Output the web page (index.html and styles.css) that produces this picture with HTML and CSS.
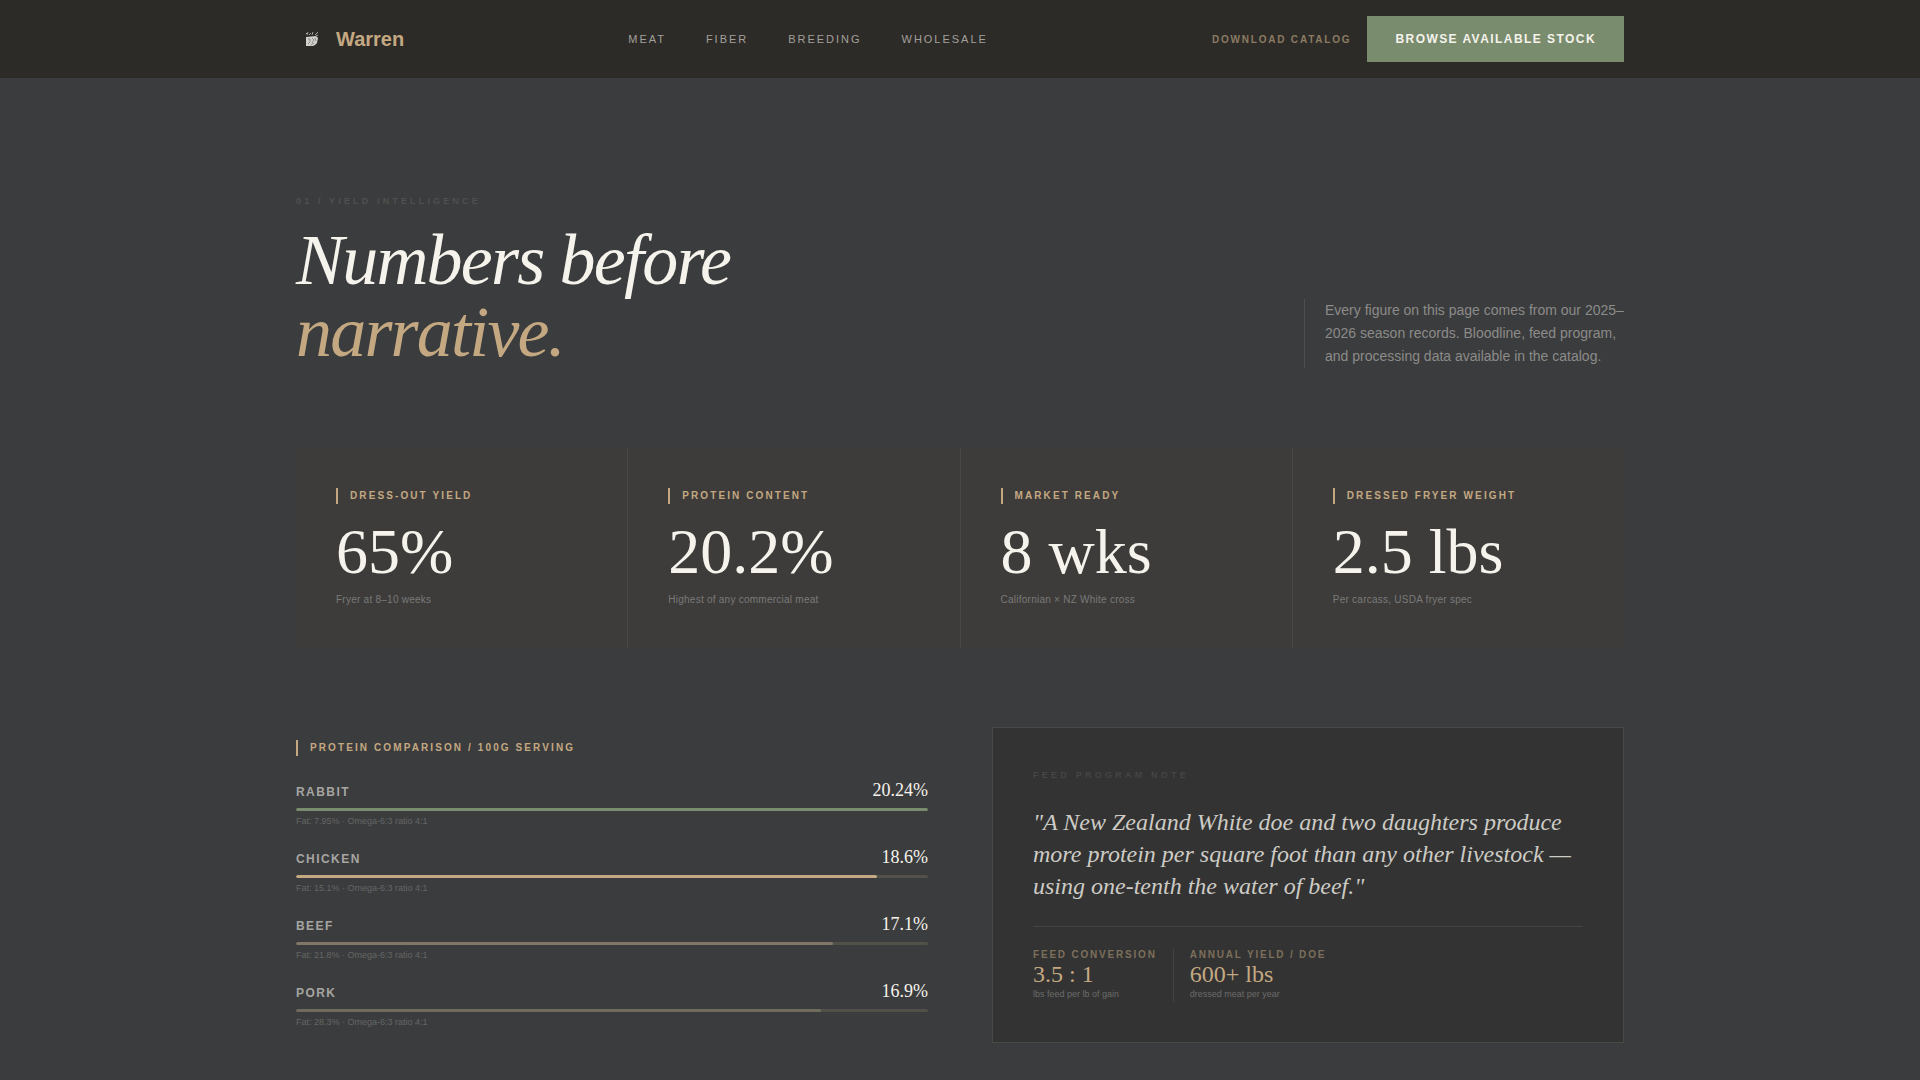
FILE: index.html
```html
<!DOCTYPE html>
<html lang="en">
<head>
  <meta charset="utf-8">
  <title>Warren</title>
  <meta name="viewport" content="width=device-width, initial-scale=1">
  <link rel="stylesheet" href="styles.css">
</head>
<body>

  <header class="site-header">
    <div class="container header-inner">
      <a href="#" class="brand">
        <svg class="brand-icon" viewBox="0 0 32 32" aria-hidden="true">
          <path d="M10 14 L20 13 L22 15 L21 20 L19 22 L17 23 L10 23 Z" fill="#d2d0cb"/>
          <path d="M11 12 L12 9 M13 12 L15 10 M16 12 L17 9 M19 12 L22 9 M10 11 L11 10 M20 13 L22 12" stroke="#a5a39e" stroke-width="1" fill="none"/>
          <path d="M12 16 L14 16 L14 19 L12 21 M16 15 L18 17 L16 20 M15 22 L18 20 M19 15 L20 18" stroke="#8f8c87" stroke-width="1" fill="none"/>
        </svg>
        <span class="brand-name">Warren</span>
      </a>
      <nav class="main-nav">
        <a href="#meat">Meat</a>
        <a href="#fiber">Fiber</a>
        <a href="#breeding">Breeding</a>
        <a href="#wholesale">Wholesale</a>
      </nav>
      <div class="header-actions">
        <a href="#catalog" class="catalog-link">Download Catalog</a>
        <button type="button" class="stock-button">Browse Available Stock</button>
      </div>
    </div>
  </header>

  <main class="container yield">
    <div class="intro">
      <div>
        <p class="eyebrow">01 / Yield Intelligence</p>
        <h1 class="title">Numbers before<br><span class="accent">narrative.</span></h1>
      </div>
      <p class="intro-text">Every figure on this page comes from our 2025–2026 season records. Bloodline, feed program, and processing data available in the catalog.</p>
    </div>

    <section class="stats">
      <div class="stat">
        <h2 class="label">Dress-out Yield</h2>
        <p class="stat-value">65%</p>
        <p class="stat-note">Fryer at 8–10 weeks</p>
      </div>
      <div class="stat">
        <h2 class="label">Protein Content</h2>
        <p class="stat-value">20.2%</p>
        <p class="stat-note">Highest of any commercial meat</p>
      </div>
      <div class="stat">
        <h2 class="label">Market Ready</h2>
        <p class="stat-value">8 wks</p>
        <p class="stat-note">Californian × NZ White cross</p>
      </div>
      <div class="stat">
        <h2 class="label">Dressed Fryer Weight</h2>
        <p class="stat-value">2.5 lbs</p>
        <p class="stat-note">Per carcass, USDA fryer spec</p>
      </div>
    </section>

    <div class="details">
      <section class="comparison">
        <h2 class="label">Protein Comparison / 100g Serving</h2>
        <div class="bars">
          <div>
            <div class="bar-head"><span class="bar-name">Rabbit</span><span class="bar-value">20.24%</span></div>
            <div class="track"><div class="fill rabbit" style="width: 100%"></div></div>
            <p class="tiny">Fat: 7.95% · Omega-6:3 ratio 4:1</p>
          </div>
          <div>
            <div class="bar-head"><span class="bar-name">Chicken</span><span class="bar-value">18.6%</span></div>
            <div class="track"><div class="fill chicken" style="width: 92%"></div></div>
            <p class="tiny">Fat: 15.1% · Omega-6:3 ratio 4:1</p>
          </div>
          <div>
            <div class="bar-head"><span class="bar-name">Beef</span><span class="bar-value">17.1%</span></div>
            <div class="track"><div class="fill beef" style="width: 85%"></div></div>
            <p class="tiny">Fat: 21.8% · Omega-6:3 ratio 4:1</p>
          </div>
          <div>
            <div class="bar-head"><span class="bar-name">Pork</span><span class="bar-value">16.9%</span></div>
            <div class="track"><div class="fill pork" style="width: 83%"></div></div>
            <p class="tiny">Fat: 28.3% · Omega-6:3 ratio 4:1</p>
          </div>
        </div>
      </section>

      <section class="note-card">
        <p class="note-label">Feed Program Note</p>
        <blockquote class="quote">"A New Zealand White doe and two daughters produce more protein per square foot than any other livestock — using one-tenth the water of beef."</blockquote>
        <div class="facts">
          <div>
            <p class="fact-label">Feed Conversion</p>
            <p class="fact-value">3.5 : 1</p>
            <p class="fact-note">lbs feed per lb of gain</p>
          </div>
          <div class="fact-split">
            <p class="fact-label">Annual Yield / Doe</p>
            <p class="fact-value">600+ lbs</p>
            <p class="fact-note">dressed meat per year</p>
          </div>
        </div>
      </section>
    </div>
  </main>

</body>
</html>
```

FILE: styles.css
```css
* {
  box-sizing: border-box;
}

body {
  margin: 0;
  background-color: #3b3c3d;
  color: #f5f3ec;
  font-family: "Liberation Sans", Arial, sans-serif;
}

h1, h2, p, blockquote {
  margin: 0;
}

a {
  text-decoration: none;
}

.container {
  max-width: 1392px;
  margin: 0 auto;
  padding: 0 32px;
}

/* header */

.site-header {
  background-color: #2d2b28;
}

.header-inner {
  display: flex;
  justify-content: space-between;
  align-items: center;
  padding-top: 16px;
  padding-bottom: 16px;
}

.brand {
  display: flex;
  align-items: center;
  gap: 8px;
  color: #c4a882;
}

.brand-icon {
  width: 32px;
  height: 32px;
}

.brand-name {
  font-size: 20px;
  font-weight: bold;
}

.main-nav {
  display: flex;
  gap: 40px;
}

.main-nav a {
  color: #a3a09a;
  font-size: 11px;
  letter-spacing: 0.18em;
  text-transform: uppercase;
}

.header-actions {
  display: flex;
  align-items: center;
  gap: 16px;
}

.catalog-link {
  color: #8b7b62;
  font-size: 10px;
  font-weight: bold;
  letter-spacing: 0.18em;
  text-transform: uppercase;
}

.stock-button {
  background-color: #7a8c6e;
  color: #f5f3ec;
  border: none;
  padding: 16px 28px;
  font-family: inherit;
  font-size: 12px;
  font-weight: bold;
  line-height: 14px;
  letter-spacing: 0.12em;
  text-transform: uppercase;
  cursor: pointer;
}

/* intro */

.yield {
  padding-top: 112px;
  padding-bottom: 32px;
}

.intro {
  display: flex;
  justify-content: space-between;
  align-items: flex-end;
  gap: 48px;
  margin-bottom: 80px;
}

.eyebrow {
  color: #50514f;
  font-size: 9px;
  font-weight: bold;
  line-height: 22px;
  letter-spacing: 0.35em;
  text-transform: uppercase;
  margin-bottom: 12px;
}

.title {
  font-family: "Liberation Serif", "Times New Roman", serif;
  font-size: 72px;
  font-style: italic;
  font-weight: normal;
  line-height: 72px;
  letter-spacing: -0.025em;
}

.accent {
  color: #c4a882;
}

.intro-text {
  max-width: 320px;
  padding-left: 20px;
  border-left: 1px solid #4f504d;
  color: #8b8b89;
  font-size: 14px;
  line-height: 23px;
}

/* stats */

.stats {
  display: grid;
  grid-template-columns: repeat(4, 1fr);
  gap: 1px;
  background-color: #484847;
  margin-bottom: 79px;
}

.stat {
  background-color: #3d3c3b;
  padding: 40px;
}

.label {
  border-left: 2px solid #c4a882;
  padding-left: 12px;
  color: #c4a882;
  font-size: 10px;
  font-weight: bold;
  line-height: 16px;
  letter-spacing: 0.21em;
  text-transform: uppercase;
}

.stat-value {
  margin: 16px 0 8px;
  font-family: "Liberation Serif", "Times New Roman", serif;
  font-size: 64px;
  line-height: 64px;
}

.stat-note {
  color: #7a7a78;
  font-size: 10px;
  line-height: 16px;
  letter-spacing: 0.025em;
}

/* comparison bars and note card */

.details {
  display: grid;
  grid-template-columns: 1fr 1fr;
  align-items: start;
  gap: 64px;
}

.comparison {
  padding-top: 13px;
}

.bars {
  display: grid;
  gap: 20px;
  margin-top: 24px;
}

.bar-head {
  display: flex;
  justify-content: space-between;
  align-items: baseline;
  line-height: 20px;
  margin-bottom: 8px;
}

.bar-name {
  color: #a6a5a2;
  font-size: 12px;
  font-weight: bold;
  line-height: 14px;
  letter-spacing: 0.12em;
  text-transform: uppercase;
}

.bar-value {
  font-family: "Liberation Serif", "Times New Roman", serif;
  font-size: 18px;
}

.track {
  height: 3px;
  border-radius: 2px;
  background-color: #51514a;
  overflow: hidden;
}

.fill {
  height: 100%;
  border-radius: 2px;
}

.rabbit {
  background-color: #7a8c6e;
}

.chicken {
  background-color: #c4a882;
}

.beef {
  background-color: #827669;
}

.pork {
  background-color: #716b5e;
}

.tiny {
  margin-top: 4px;
  color: #656665;
  font-size: 9px;
  line-height: 12px;
}

.note-card {
  background-color: #333333;
  border: 1px solid #484846;
  padding: 40px;
}

.note-label {
  color: #454544;
  font-size: 9px;
  font-weight: bold;
  line-height: 14px;
  letter-spacing: 0.36em;
  text-transform: uppercase;
}

.quote {
  margin: 24px 0;
  color: #cdcbc5;
  font-family: "Liberation Serif", "Times New Roman", serif;
  font-size: 24px;
  font-style: italic;
  line-height: 32px;
}

.facts {
  display: flex;
  gap: 16px;
  border-top: 1px solid #434342;
  padding-top: 22px;
}

.fact-split {
  border-left: 1px solid #434342;
  padding-left: 16px;
}

.fact-label {
  color: #7c6f5b;
  font-size: 10px;
  font-weight: bold;
  line-height: 12px;
  letter-spacing: 0.18em;
  text-transform: uppercase;
}

.fact-value {
  color: #c4a882;
  font-family: "Liberation Serif", "Times New Roman", serif;
  font-size: 24px;
  line-height: 26px;
}

.fact-note {
  color: #6b6b69;
  font-size: 9px;
  line-height: 15px;
}
```
